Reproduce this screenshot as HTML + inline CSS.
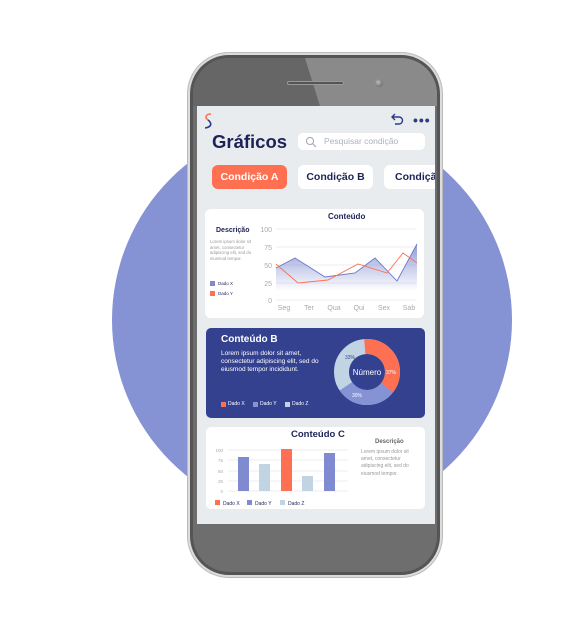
<!DOCTYPE html>
<html><head><meta charset="utf-8"><style>
*{margin:0;padding:0;box-sizing:border-box}
body{width:569px;height:630px;background:#fff;position:relative;overflow:hidden;font-family:"Liberation Sans",sans-serif}
.a{position:absolute}
.t{position:absolute;white-space:nowrap}
</style></head><body>
<div class="a" style="left:112px;top:120px;width:400px;height:400px;border-radius:50%;background:#8592d3"></div>
<div class="a" style="left:187px;top:52px;width:256px;height:526px;border-radius:42px;background:#dcdcdc;border:1px solid #bbb"></div>
<div class="a" style="left:190px;top:55px;width:250px;height:520px;border-radius:39px;background:#555"></div>
<div class="a" style="left:193px;top:58px;width:244px;height:514px;border-radius:36px;background:#6e6e6e;overflow:hidden">
 <svg width="244" height="514" style="position:absolute;left:0;top:0"><polygon points="0,0 112,0 127,48 0,48" fill="#666"/><polygon points="112,0 244,0 244,48 127,48" fill="#8a8a8a"/></svg>
</div>
<div class="a" style="left:287px;top:81px;width:57px;height:4px;border-radius:3px;background:#555;border:1px solid #999"></div>
<div class="a" style="left:375px;top:79px;width:8px;height:8px;border-radius:50%;background:radial-gradient(circle at 40% 40%,#bbb,#555)"></div>
<div class="a" style="left:197px;top:106px;width:238px;height:418px;background:#e9ecef;overflow:hidden">
 <svg class="a" style="left:5px;top:6px" width="14" height="18"><path d="M9 2 C3 2 3 6 6 8" stroke="#ff7052" stroke-width="1.6" fill="none"/><path d="M6 8 C10 11 10 15 3 16" stroke="#2d3a8c" stroke-width="1.6" fill="none"/></svg>
 <svg class="a" style="left:193px;top:7px" width="14" height="12"><path d="M3 4 H9 A3.5 3.5 0 0 1 9 11 H5 M5 1 L2 4 L5 7" stroke="#2d3a8c" stroke-width="1.4" fill="none"/></svg>
 <div class="t" style="left:216px;top:9px;color:#2d3a8c;font-size:14px;font-weight:bold;letter-spacing:1px;line-height:10px">•••</div>
 <div class="t" style="left:15px;top:25px;font-size:18.5px;font-weight:bold;color:#1d2356">Gráficos</div>
 <div class="a" style="left:101px;top:27px;width:127px;height:17px;background:#fff;border-radius:5px"></div>
 <svg class="a" style="left:108px;top:30px" width="12" height="12"><circle cx="5" cy="5" r="3.6" stroke="#aab" stroke-width="1.1" fill="none"/><path d="M7.6 7.6 L11 11" stroke="#aab" stroke-width="1.2"/></svg>
 <div class="t" style="left:127px;top:30px;font-size:8.5px;color:#aab0bd">Pesquisar condição</div>
 <div class="a" style="left:15px;top:59px;width:75px;height:24px;background:#ff7052;border-radius:6px;color:#fff;font-size:10.5px;font-weight:bold;text-align:center;line-height:24px">Condição A</div>
 <div class="a" style="left:101px;top:59px;width:75px;height:24px;background:#fff;border-radius:6px;color:#1d2356;font-size:10.5px;font-weight:bold;text-align:center;line-height:24px">Condição B</div>
 <div class="a" style="left:187px;top:59px;width:75px;height:24px;background:#fff;border-radius:6px;color:#1d2356;font-size:10.5px;font-weight:bold;line-height:24px;padding-left:11px">Condição C</div>
 <div class="a" style="left:8px;top:103px;width:219px;height:109px;background:#fff;border-radius:6px"></div>
 <div class="t" style="left:131px;top:106px;font-size:8px;font-weight:bold;color:#1d2356">Conteúdo</div>
 <div class="t" style="left:19px;top:121px;font-size:7px;font-weight:bold;color:#1d2356">Descrição</div>
 <div class="a" style="left:13px;top:133px;width:50px;font-size:4.3px;line-height:5.6px;color:#999">Lorem ipsum dolor sit amet, consectetur adipiscing elit, sed do eiusmod tempor.</div>
 <div class="a" style="left:13px;top:175px;width:5px;height:5px;background:#7f8ad0"></div><div class="t" style="left:21px;top:175px;font-size:4.5px;color:#1d2356">Dado X</div>
 <div class="a" style="left:13px;top:185px;width:5px;height:5px;background:#ff7052"></div><div class="t" style="left:21px;top:185px;font-size:4.5px;color:#1d2356">Dado Y</div>
 <svg class="a" style="left:0;top:0" width="238" height="220">
  <defs><linearGradient id="g" x1="0" y1="0" x2="0" y2="1"><stop offset="0" stop-color="#7f8ad0" stop-opacity=".85"/><stop offset="1" stop-color="#7f8ad0" stop-opacity="0"/></linearGradient></defs>
  <g stroke="#e6e8ee" stroke-width="0.8"><line x1="79" y1="123" x2="219" y2="123"/><line x1="79" y1="141" x2="219" y2="141"/><line x1="79" y1="159" x2="219" y2="159"/><line x1="79" y1="177" x2="219" y2="177"/><line x1="79" y1="194" x2="219" y2="194"/></g>
  <g font-size="7" fill="#aaa" font-family="Liberation Sans" text-anchor="end"><text x="75" y="126">100</text><text x="75" y="144">75</text><text x="75" y="162">50</text><text x="75" y="180">25</text><text x="75" y="197">0</text></g>
  <g font-size="7" fill="#aaa" font-family="Liberation Sans" text-anchor="middle"><text x="87" y="204">Seg</text><text x="112" y="204">Ter</text><text x="137" y="204">Qua</text><text x="162" y="204">Qui</text><text x="187" y="204">Sex</text><text x="212" y="204">Sab</text></g>
  <path d="M79 162 L98 152 L128 171 L158 167 L178 152 L200 175 L220 138 L220 185 L79 185Z" fill="url(#g)"/>
  <path d="M79 162 L98 152 L128 171 L158 167 L178 152 L200 175 L220 138" stroke="#6a78c8" stroke-width="0.9" fill="none"/>
  <path d="M79 158 L101 177 L131 174 L161 158 L190 167 L206 147 L220 157" stroke="#ff7052" stroke-width="0.9" fill="none"/>
 </svg>
 <div class="a" style="left:9px;top:222px;width:219px;height:90px;background:#33418f;border-radius:5px"></div>
 <div class="t" style="left:24px;top:228px;font-size:10px;font-weight:bold;color:#fff">Conteúdo B</div>
 <div class="a" style="left:24px;top:244px;width:110px;font-size:6.5px;line-height:8px;color:#fff">Lorem ipsum dolor sit amet, consectetur adipiscing elit, sed do eiusmod tempor incididunt.</div>
 <div class="a" style="left:24px;top:296px;width:5px;height:5px;background:#ff7052"></div><div class="t" style="left:31px;top:295px;font-size:5px;color:#fff">Dado X</div>
 <div class="a" style="left:56px;top:296px;width:5px;height:5px;background:#8592d3"></div><div class="t" style="left:63px;top:295px;font-size:5px;color:#fff">Dado Y</div>
 <div class="a" style="left:88px;top:296px;width:5px;height:5px;background:#c0d4e3"></div><div class="t" style="left:95px;top:295px;font-size:5px;color:#fff">Dado Z</div>
 <svg class="a" style="left:137px;top:232px" width="66" height="68">
  <g transform="translate(33,34)" fill="none" stroke-width="15">
   <circle r="25.5" stroke="#c0d4e3"/>
   <circle r="25.5" stroke="#ff7052" stroke-dasharray="59.3 200" transform="rotate(-95)"/>
   <circle r="25.5" stroke="#8592d3" stroke-dasharray="48 200" transform="rotate(38)"/>
  </g>
  <text x="33" y="37" text-anchor="middle" font-size="8" fill="#fff" font-family="Liberation Sans">Número</text>
  <text x="11" y="21" font-size="5" fill="#33418f" font-family="Liberation Sans">33%</text>
  <text x="52" y="36" font-size="5" fill="#fff" font-family="Liberation Sans">37%</text>
  <text x="18" y="59" font-size="5" fill="#fff" font-family="Liberation Sans">30%</text>
 </svg>
 <div class="a" style="left:9px;top:321px;width:219px;height:82px;background:#fff;border-radius:5px"></div>
 <div class="t" style="left:94px;top:323px;font-size:9.5px;font-weight:bold;color:#1d2356">Conteúdo C</div>
 <div class="t" style="left:178px;top:333px;font-size:6px;font-weight:bold;color:#666">Descrição</div>
 <div class="a" style="left:164px;top:343px;width:60px;font-size:5px;line-height:7.2px;color:#999">Lorem ipsum dolor sit amet, consectetur adipiscing elit, sed do eiusmod tempor.</div>
 <svg class="a" style="left:0;top:0" width="238" height="410">
  <g stroke="#e6e8ee" stroke-width="0.8"><line x1="31" y1="344" x2="151" y2="344"/><line x1="31" y1="354" x2="151" y2="354"/><line x1="31" y1="365" x2="151" y2="365"/><line x1="31" y1="375" x2="151" y2="375"/><line x1="31" y1="385" x2="151" y2="385"/></g>
  <g font-size="4.5" fill="#aaa" font-family="Liberation Sans" text-anchor="end"><text x="26" y="346">100</text><text x="26" y="356">75</text><text x="26" y="367">50</text><text x="26" y="377">25</text><text x="26" y="387">0</text></g>
  <rect x="41" y="351" width="11" height="34" fill="#7f8ad0"/>
  <rect x="62" y="358" width="11" height="27" fill="#c0d4e3"/>
  <rect x="84" y="343" width="11" height="42" fill="#ff7052"/>
  <rect x="105" y="370" width="11" height="15" fill="#c0d4e3"/>
  <rect x="127" y="347" width="11" height="38" fill="#7f8ad0"/>
  <rect x="18" y="394" width="5" height="5" fill="#ff7052"/><text x="26" y="399" font-size="5" fill="#1d2356" font-family="Liberation Sans">Dado X</text>
  <rect x="50" y="394" width="5" height="5" fill="#7f8ad0"/><text x="58" y="399" font-size="5" fill="#1d2356" font-family="Liberation Sans">Dado Y</text>
  <rect x="83" y="394" width="5" height="5" fill="#c0d4e3"/><text x="91" y="399" font-size="5" fill="#1d2356" font-family="Liberation Sans">Dado Z</text>
 </svg>
</div>
</body></html>
